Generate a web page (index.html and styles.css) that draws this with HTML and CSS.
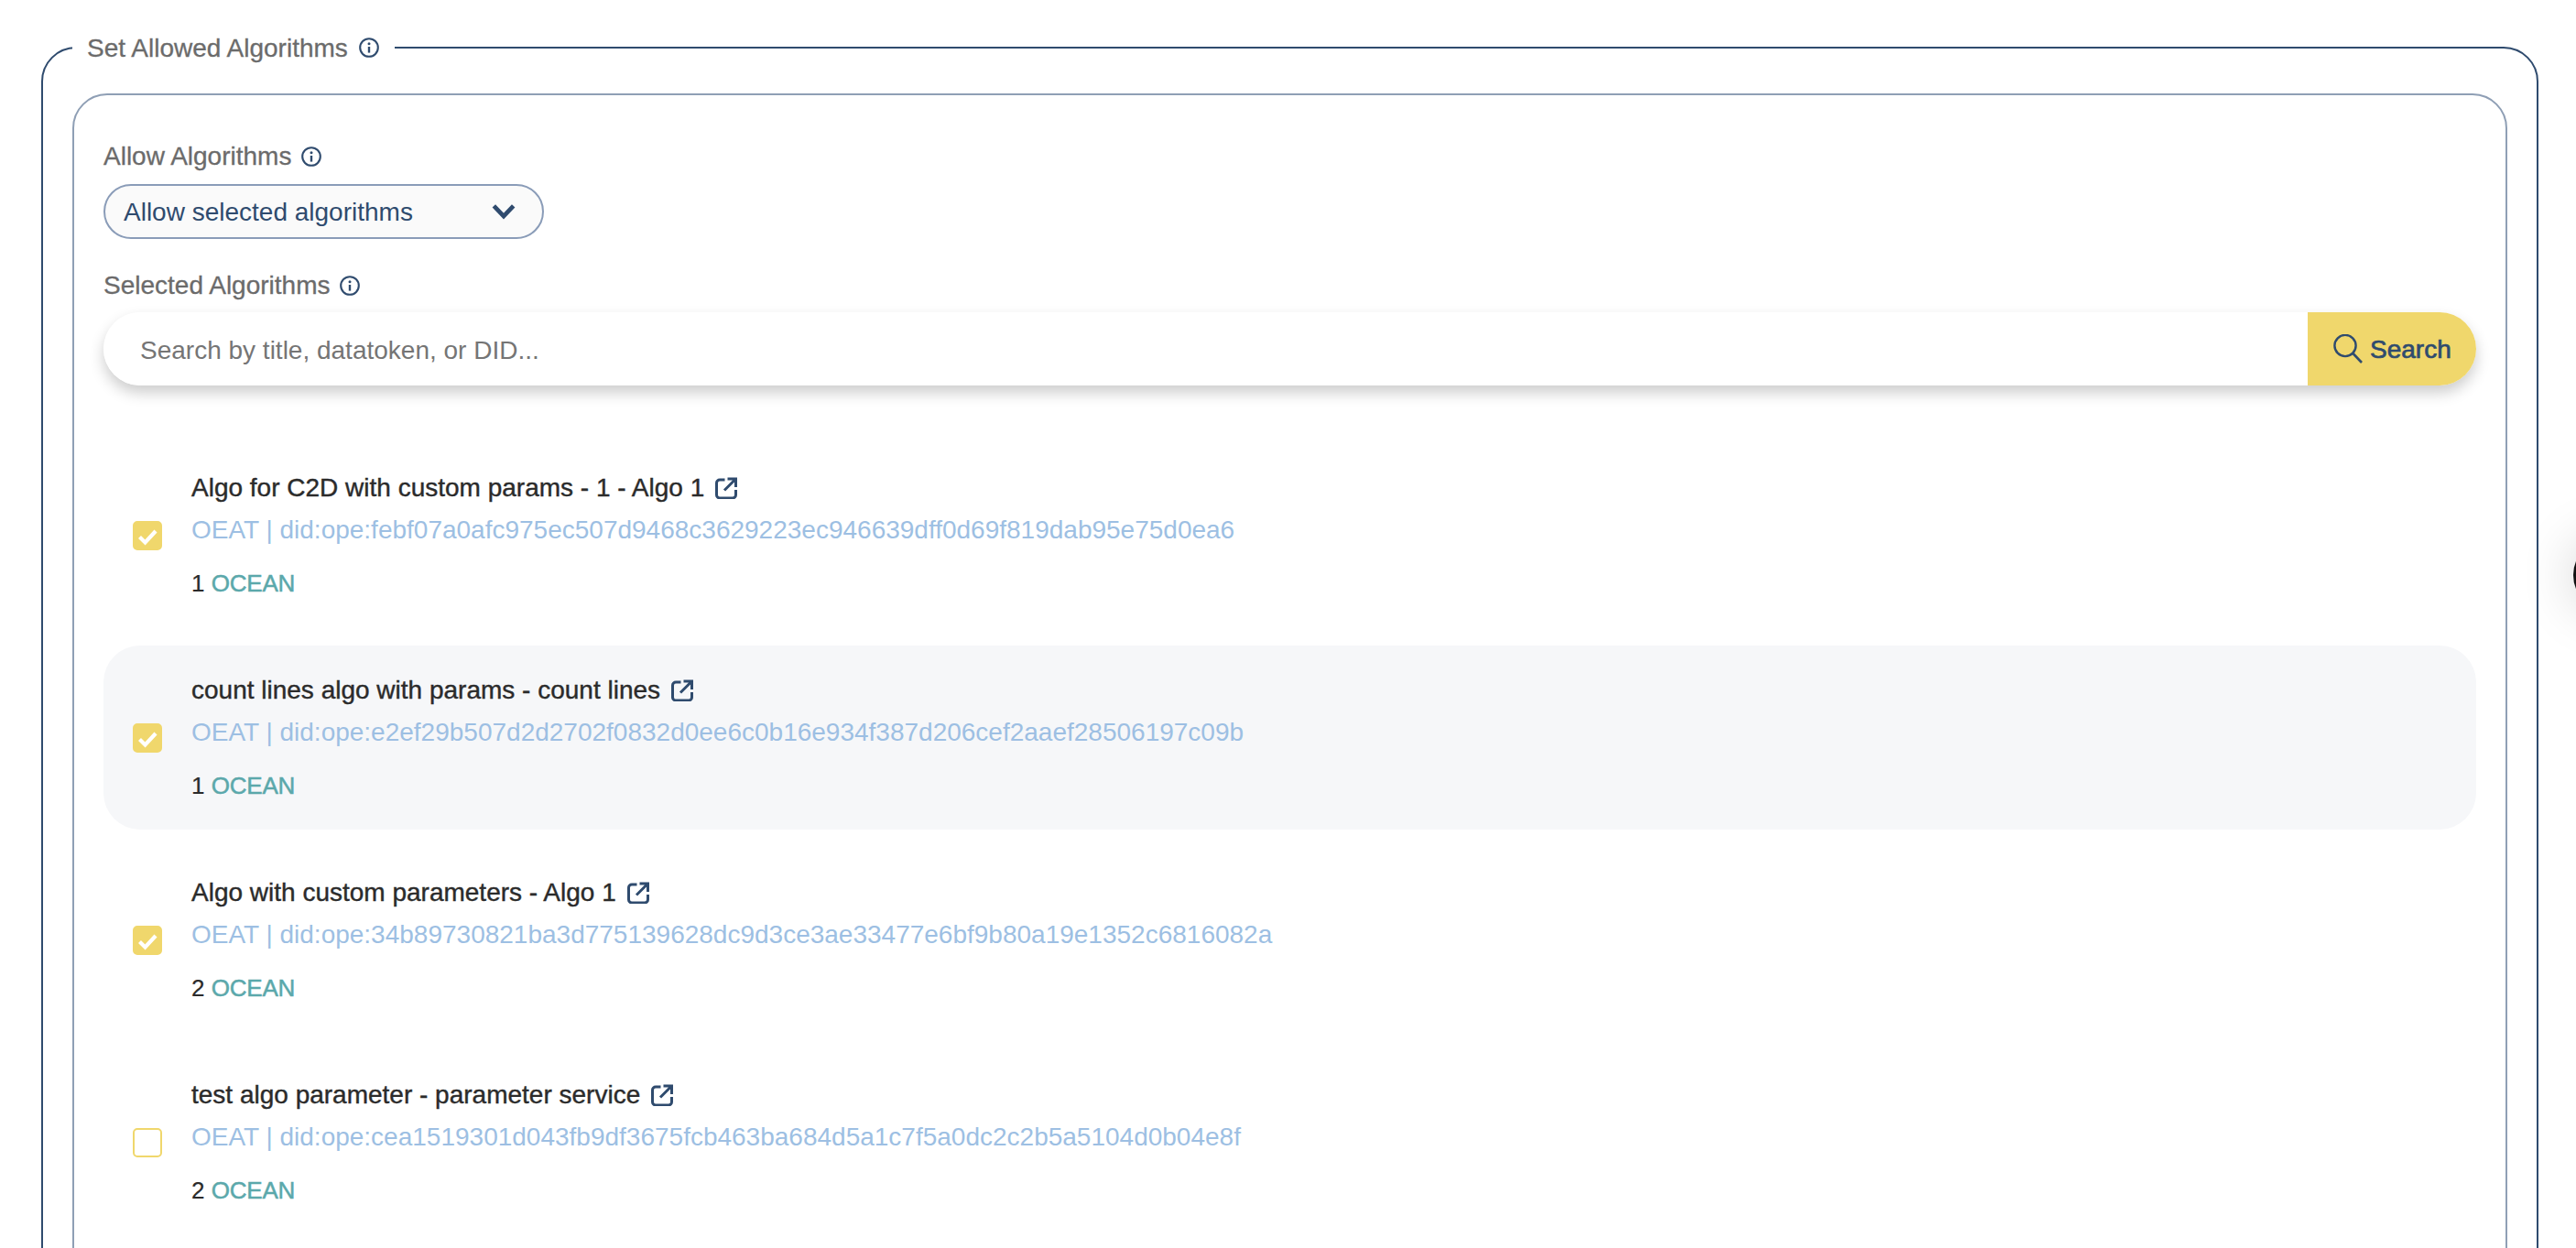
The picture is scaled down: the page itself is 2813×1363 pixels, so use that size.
FILE: index.html
```html
<!DOCTYPE html>
<html lang="en">
<head>
<meta charset="utf-8">
<title>Set Allowed Algorithms</title>
<link rel="stylesheet" href="styles.css">
</head>
<body>
<svg class="sprites" aria-hidden="true">
  <symbol id="info" viewBox="0 0 22 22"><circle cx="11" cy="11" r="9.8" fill="none" stroke="currentColor" stroke-width="2.1"/><circle cx="11" cy="6.8" r="1.5" fill="currentColor"/><path d="M11 10v6.6" fill="none" stroke="currentColor" stroke-width="2.4"/></symbol>
  <symbol id="ext" viewBox="0 0 24 24"><path d="M10.5 3H5a3.5 3.5 0 0 0-3.5 3.5v13A3.5 3.5 0 0 0 5 23h14a3.5 3.5 0 0 0 3.5-3.5V14" fill="none" stroke="currentColor" stroke-width="3"/><path d="M10 14.5 21 3.5M13.5 2h9v9" fill="none" stroke="currentColor" stroke-width="3"/></symbol>
  <symbol id="tick" viewBox="0 0 32 32"><path d="M7.5 17.5 13.5 23.5 25 11" fill="none" stroke="#fff" stroke-width="4.2"/></symbol>
</svg>
<main class="page">
  <fieldset class="outer">
    <legend class="legend"><span class="legend-text">Set Allowed Algorithms</span> <svg class="info"><use href="#info"/></svg></legend>
    <div class="inner">
      <div class="label">Allow Algorithms <svg class="info"><use href="#info"/></svg></div>
      <div class="select">
        <span class="select-text">Allow selected algorithms</span>
        <svg class="chevron" viewBox="0 0 24 16"><path d="M2.5 2.5 12 12.5 21.5 2.5" fill="none" stroke="currentColor" stroke-width="4.2"/></svg>
      </div>
      <div class="label label-selected">Selected Algorithms <svg class="info"><use href="#info"/></svg></div>
      <div class="search">
        <input class="search-input" type="text" placeholder="Search by title, datatoken, or DID...">
        <button class="search-btn" type="button">
          <svg class="search-icon" viewBox="0 0 32 32"><circle cx="13" cy="12.5" r="11.6" fill="none" stroke="currentColor" stroke-width="2.4"/><path d="M21.5 21 31 31" fill="none" stroke="currentColor" stroke-width="2.6"/></svg>
          <span class="search-label">Search</span>
        </button>
      </div>
      <ul class="rows">
        <li class="row">
          <span class="check checked"><svg><use href="#tick"/></svg></span>
          <div class="row-body">
            <div class="title">Algo for C2D with custom params - 1 - Algo 1 <svg class="ext"><use href="#ext"/></svg></div>
            <div class="did">OEAT | did:ope:febf07a0afc975ec507d9468c3629223ec946639dff0d69f819dab95e75d0ea6</div>
            <div class="price">1 <span class="token">OCEAN</span></div>
          </div>
        </li>
        <li class="row row-alt">
          <span class="check checked"><svg><use href="#tick"/></svg></span>
          <div class="row-body">
            <div class="title">count lines algo with params - count lines <svg class="ext"><use href="#ext"/></svg></div>
            <div class="did">OEAT | did:ope:e2ef29b507d2d2702f0832d0ee6c0b16e934f387d206cef2aaef28506197c09b</div>
            <div class="price">1 <span class="token">OCEAN</span></div>
          </div>
        </li>
        <li class="row">
          <span class="check checked"><svg><use href="#tick"/></svg></span>
          <div class="row-body">
            <div class="title">Algo with custom parameters - Algo 1 <svg class="ext"><use href="#ext"/></svg></div>
            <div class="did">OEAT | did:ope:34b89730821ba3d775139628dc9d3ce3ae33477e6bf9b80a19e1352c6816082a</div>
            <div class="price">2 <span class="token">OCEAN</span></div>
          </div>
        </li>
        <li class="row">
          <span class="check"></span>
          <div class="row-body">
            <div class="title">test algo parameter - parameter service <svg class="ext"><use href="#ext"/></svg></div>
            <div class="did">OEAT | did:ope:cea1519301d043fb9df3675fcb463ba684d5a1c7f5a0dc2c2b5a5104d0b04e8f</div>
            <div class="price">2 <span class="token">OCEAN</span></div>
          </div>
        </li>
      </ul>
    </div>
  </fieldset>
</main>
<div class="floating" aria-hidden="true"></div>
</body>
</html>
```

FILE: styles.css
```css
* { box-sizing: border-box; }
html, body { margin: 0; height: 1363px; overflow: hidden; background: #fff; }
body { font-family: "Liberation Sans", Arial, sans-serif; font-size: 28px; color: #2b2b2b; position: relative; }
.sprites { display: none; }
.page { padding: 34px 41px 0 45px; }
.outer { margin: 0; padding: 0 32px 60px; border: 2px solid #2f4b6e; border-radius: 38px; min-width: 0; }
.legend { padding: 0 17px 0 16px; margin: 0; height: 36px; line-height: 36px; color: #6b6b6b; display: flex; align-items: center; gap: 12px; -webkit-text-stroke: 0.3px #6b6b6b; }
.legend-text { padding-top: 2px; }
.info { width: 22px; height: 22px; color: #2f4b6e; flex: none; }
.inner { margin-top: 32px; padding: 47px 32px 60px; border: 2px solid #8f9fb5; border-radius: 38px; }
.label { line-height: 40px; color: #6b6b6b; display: flex; align-items: center; gap: 11px; -webkit-text-stroke: 0.3px #6b6b6b; }
.select { margin-top: 10px; width: 481px; height: 60px; padding: 0 28px 0 20px; border: 2px solid #8a9cb8; border-radius: 30px; background: #fafafa; color: #2f4b6e; display: flex; align-items: center; justify-content: space-between; }
.select-text { padding-top: 2px; }
.chevron { width: 28px; height: 18px; color: #2f4b6e; }
.label-selected { margin-top: 31px; }
.search { margin-top: 9px; height: 80px; display: flex; border-radius: 40px; box-shadow: 0 8px 16px rgba(0, 0, 0, 0.2); }
.search-input { flex: 1; min-width: 0; border: 0; outline: 0; padding: 4px 0 0 40px; background: #fff; border-radius: 40px 0 0 40px; font: inherit; color: #2b2b2b; }
.search-input::placeholder { color: #757575; opacity: 1; }
.search-btn { width: 184px; flex: none; border: 0; padding: 0 0 0 28px; border-radius: 0 40px 40px 0; background: #f0d76c; color: #2f4b6e; font: inherit; display: flex; align-items: center; gap: 8px; -webkit-text-stroke: 0.7px #2f4b6e; }
.search-icon { width: 32px; height: 32px; }
.search-label { padding-top: 2px; }
.rows { list-style: none; margin: 63px 0 0; padding: 0; display: flex; flex-direction: column; gap: 20px; }
.row { height: 201px; padding: 0 32px; border-radius: 40px; display: flex; align-items: center; gap: 32px; }
.row-alt { background: #f6f7f9; }
.check { width: 32px; height: 32px; flex: none; border: 2px solid #f0d76c; border-radius: 5px; background: #fff; }
.check svg { display: block; width: 32px; height: 32px; margin: -2px; }
.checked { background: #f0d76c; }
.row-body { display: flex; flex-direction: column; }
.title { line-height: 40px; display: flex; align-items: center; gap: 12px; -webkit-text-stroke: 0.4px #2b2b2b; }
.ext { width: 24px; height: 24px; color: #2f4b6e; flex: none; }
.did { margin-top: 6px; line-height: 40px; color: #9dbfe3; }
.price { margin-top: 18px; line-height: 40px; font-size: 26px; white-space: pre; -webkit-text-stroke: 0.2px #2b2b2b; }
.token { color: #5ba8ab; -webkit-text-stroke: 0.5px #5ba8ab; letter-spacing: -0.2px; }
.floating { position: absolute; left: 2810px; top: 589px; width: 78px; height: 78px; border-radius: 50%; background: #111; box-shadow: 0 0 60px rgba(0, 0, 0, 0.18); }
```
